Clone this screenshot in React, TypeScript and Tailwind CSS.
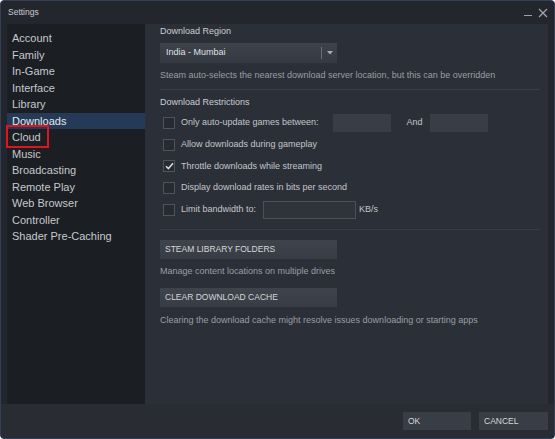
import React from 'react';

const NAV = [
  'Account',
  'Family',
  'In-Game',
  'Interface',
  'Library',
  'Downloads',
  'Cloud',
  'Music',
  'Broadcasting',
  'Remote Play',
  'Web Browser',
  'Controller',
  'Shader Pre-Caching',
];

const RESTRICTIONS = [
  { label: 'Only auto-update games between:', checked: false, extra: 'times' },
  { label: 'Allow downloads during gameplay', checked: false },
  { label: 'Throttle downloads while streaming', checked: true },
  { label: 'Display download rates in bits per second', checked: false },
  { label: 'Limit bandwidth to:', checked: false, extra: 'limit' },
];

const Checkbox: React.FC<{ checked: boolean }> = ({ checked }) => (
  <span className="w-[12px] h-[12px] border border-[#4f535b] bg-[#262a31] flex items-center justify-center shrink-0">
    {checked && (
      <svg width="9" height="8" viewBox="0 0 9 8">
        <path d="M1 4.2 L3.4 6.6 L8 1.2" stroke="#d6d8dc" strokeWidth="1.6" fill="none" />
      </svg>
    )}
  </span>
);

const App: React.FC = () => {
  return (
    <div
      className="w-[555px] h-[439px] bg-[#23262d] flex flex-col rounded-[4px] border border-[#34405a] overflow-hidden text-[#c5c8cd]"
      style={{ fontFamily: '"Liberation Sans", Arial, sans-serif' }}
    >
      {/* title bar */}
      <div className="h-[23px] flex items-center justify-between pl-[7px] pr-[6px] shrink-0">
        <span className="text-[8.5px] text-[#c9ccd1]">Settings</span>
        <div className="flex items-center gap-[6px] text-[#9da1a8]">
          <span className="w-[8px] h-px bg-[#9da1a8] mt-[5px]" />
          <svg width="10" height="10" viewBox="0 0 10 10">
            <path d="M1 1 L9 9 M9 1 L1 9" stroke="#a4a8ae" strokeWidth="1.2" />
          </svg>
        </div>
      </div>

      {/* body */}
      <div className="flex h-[380px] pl-[6px] pr-[6px] shrink-0">
        <div className="w-[138px] bg-[#1b1e22] pt-[6px] flex flex-col">
          {NAV.map((item) => (
            <div
              key={item}
              className={`relative h-[16.5px] flex items-center pl-[5px] text-[11px] ${
                item === 'Downloads' ? 'bg-[#243a57] text-[#e3e6ea]' : 'text-[#c6c9cd]'
              }`}
            >
              {item}
              {item === 'Cloud' && (
                <span className="absolute left-[-1px] top-[-4px] w-[43px] h-[23px] border-2 border-[#e0141c]" />
              )}
            </div>
          ))}
        </div>

        <div className="flex-1 bg-[#2b2f37] pl-[15px] pr-[8px] pt-px flex flex-col">
          <div className="h-[14px] flex items-center text-[9px] text-[#cbced2]">Download Region</div>
          <div className="mt-[4px] w-[177px] h-[20px] bg-gradient-to-b from-[#3e424b] to-[#353941] flex items-center">
            <span className="flex-1 pl-[6px] text-[9px] text-[#dfe1e5]">India - Mumbai</span>
            <span className="w-px h-[12px] bg-[#6a6e75]" />
            <span className="w-[15px] flex justify-center">
              <svg width="6" height="4" viewBox="0 0 6 4">
                <path d="M0 0 L6 0 L3 3.5 Z" fill="#a9adb3" />
              </svg>
            </span>
          </div>
          <div className="mt-[6px] h-[14px] flex items-center text-[9px] text-[#9a9ea5] whitespace-nowrap">
            Steam auto-selects the nearest download server location, but this can be overridden
          </div>
          <div className="mt-[6px] h-px bg-[#3a3e46]" />

          <div className="mt-[6px] h-[14px] flex items-center text-[9px] text-[#cbced2]">Download Restrictions</div>
          <div className="mt-[2px] flex flex-col">
            {RESTRICTIONS.map((r) => (
              <div key={r.label} className="h-[21.75px] flex items-center pl-[3px]">
                <Checkbox checked={r.checked} />
                <span className="ml-[6px] text-[9px] text-[#c3c6cb] whitespace-nowrap">{r.label}</span>
                {r.extra === 'times' && (
                  <div className="flex items-center ml-[14px]">
                    <span className="w-[58px] h-[18px] bg-[#393d45]" />
                    <span className="ml-[16px] w-[23px] text-[9px] text-[#c3c6cb]">And</span>
                    <span className="w-[58px] h-[18px] bg-[#393d45]" />
                  </div>
                )}
                {r.extra === 'limit' && (
                  <div className="flex items-center ml-[7px]">
                    <span className="w-[93px] h-[18px] bg-[#2f333a] border border-[#4c5058]" />
                    <span className="ml-[3px] text-[9px] text-[#c3c6cb]">KB/s</span>
                  </div>
                )}
              </div>
            ))}
          </div>
          <div className="mt-[8px] h-px bg-[#3a3e46]" />

          <button className="mt-[10px] w-[177px] h-[19px] bg-gradient-to-b from-[#3f434c] to-[#383c44] text-left pl-[5px] text-[8.5px] text-[#d5d8dc]">
            STEAM LIBRARY FOLDERS
          </button>
          <div className="mt-[6px] h-[14px] flex items-center text-[9px] text-[#9a9ea5]">
            Manage content locations on multiple drives
          </div>
          <button className="mt-[9px] w-[177px] h-[19px] bg-gradient-to-b from-[#3f434c] to-[#383c44] text-left pl-[5px] text-[8.5px] text-[#d5d8dc]">
            CLEAR DOWNLOAD CACHE
          </button>
          <div className="mt-[7px] h-[14px] flex items-center text-[9px] text-[#9a9ea5]">
            Clearing the download cache might resolve issues downloading or starting apps
          </div>
        </div>
      </div>

      {/* footer */}
      <div className="flex-1 bg-[#292c33] flex items-start justify-end gap-[8px] pr-[6px] pt-[8px]">
        <button className="w-[68px] h-[18px] bg-[#393d45] text-left pl-[5px] text-[8.5px] text-[#d5d8dc]">OK</button>
        <button className="w-[69px] h-[18px] bg-[#393d45] text-left pl-[5px] text-[8.5px] text-[#d5d8dc]">CANCEL</button>
      </div>
    </div>
  );
};

export default App;
